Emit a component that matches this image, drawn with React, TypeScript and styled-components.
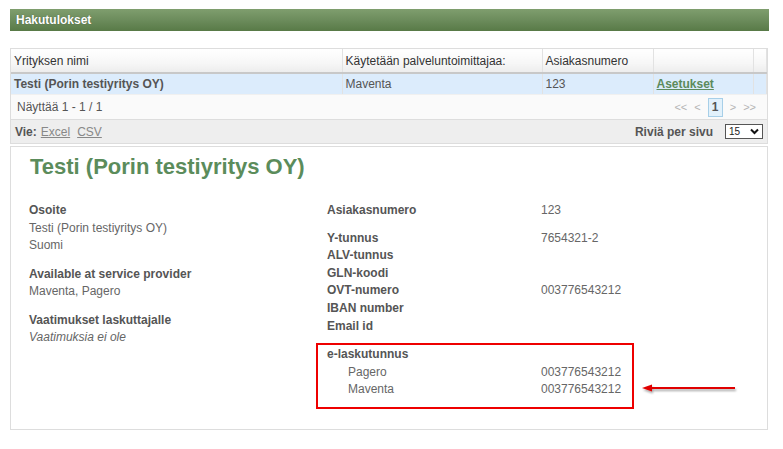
import React from 'react';
import styled, { createGlobalStyle } from 'styled-components';

const GlobalStyle = createGlobalStyle`
  html, body {
    margin: 0;
    padding: 0;
    background: #ffffff;
  }
  body {
    font-family: "Liberation Sans", Arial, sans-serif;
    font-size: 12px;
    color: #555555;
  }
`;

const Page = styled.div`
  width: 759px;
  padding: 9px 0 0 10px;
`;

const TitleBar = styled.div`
  height: 22px;
  line-height: 22px;
  padding-left: 6px;
  background: linear-gradient(to bottom, #7f9e6e 0%, #6c8c5c 50%, #587a47 100%);
  color: #ffffff;
  font-weight: bold;
  font-size: 12px;
  text-shadow: 0 0 1px rgba(0, 0, 0, 0.4);
`;

const Grid = styled.div`
  margin-top: 17px;
  width: 758px;
  border: 1px solid #dddddd;
  box-sizing: border-box;
`;

const Table = styled.table`
  width: 100%;
  border-collapse: collapse;
  table-layout: fixed;
`;

const HeadCell = styled.th<{ $w?: number }>`
  box-sizing: border-box;
  ${(p) => (p.$w ? `width: ${p.$w}px;` : '')}
  height: 24px;
  padding: 0 3px;
  text-align: left;
  font-weight: normal;
  color: #333333;
  background: linear-gradient(to bottom, #ffffff 0%, #f7f7f7 60%, #ededed 100%);
  border-right: 1px solid #e2e2e2;
  border-bottom: 2px solid #c8c8c8;
  white-space: nowrap;
  overflow: hidden;
`;

const Cell = styled.td<{ $bold?: boolean }>`
  box-sizing: border-box;
  height: 21px;
  line-height: 14px;
  padding: 0 3px;
  background: #dcecfc;
  border-right: 1px solid #e2e2e2;
  font-weight: ${(p) => (p.$bold ? 'bold' : 'normal')};
  color: #555555;
  white-space: nowrap;
  overflow: hidden;
`;

const SettingsLink = styled.a`
  color: #5b8a5b;
  font-weight: bold;
  text-decoration: underline;
`;

const PagerRow = styled.div`
  display: flex;
  align-items: center;
  justify-content: space-between;
  height: 24px;
  padding: 0 6px;
  background: #fafafa;
  border-top: 1px solid #f0f0f0;
`;

const Pager = styled.div`
  display: flex;
  align-items: center;
  gap: 7px;
  color: #b4b4b4;
  font-size: 11px;
  margin-right: 5px;
`;

const PageBox = styled.span`
  display: inline-block;
  width: 13px;
  height: 17px;
  line-height: 17px;
  text-align: center;
  border: 1px solid #a7cfe8;
  background: #e2f1fb;
  color: #555555;
  font-weight: bold;
  font-size: 12px;
`;

const ExportRow = styled.div`
  display: flex;
  align-items: center;
  justify-content: space-between;
  height: 23px;
  padding: 0 4px;
  background: #eeeeee;
  border-top: 1px solid #dddddd;
`;

const Bold = styled.span`
  font-weight: bold;
  color: #555555;
`;

const ExportLink = styled.a<{ $gap: number }>`
  color: #888888;
  text-decoration: underline;
  margin-left: ${(p) => p.$gap}px;
`;

const PerPage = styled.div`
  display: flex;
  align-items: center;
  gap: 12px;
`;

const Select = styled.div`
  display: flex;
  align-items: center;
  justify-content: space-between;
  width: 30px;
  height: 13px;
  padding: 0 3px;
  border: 1px solid #555555;
  background: #ffffff;
  color: #222222;
  font-size: 10px;
`;

const Detail = styled.div`
  position: relative;
  margin-top: 2px;
  width: 758px;
  height: 284px;
  box-sizing: border-box;
  border: 1px solid #dddddd;
  padding: 5px 18px 0 18px;
`;

const Heading = styled.h1`
  margin: 0 0 0 1px;
  font-size: 22px;
  line-height: 30px;
  font-weight: bold;
  color: #5b8c5b;
`;

const Columns = styled.div`
  display: flex;
  margin-top: 20px;
`;

const LeftCol = styled.div`
  width: 298px;
  display: flex;
  flex-direction: column;
  gap: 11px;
`;

const Block = styled.div`
  display: flex;
  flex-direction: column;
  line-height: 17.5px;
`;

const Label = styled.div`
  font-weight: bold;
  color: #555555;
`;

const Value = styled.div<{ $italic?: boolean }>`
  color: #666666;
  font-style: ${(p) => (p.$italic ? 'italic' : 'normal')};
`;

const RightCol = styled.div`
  display: flex;
  flex-direction: column;
  gap: 10px;
  width: 320px;
`;

const Row = styled.div<{ $indent?: boolean }>`
  display: grid;
  grid-template-columns: ${(p) => (p.$indent ? '21px 193px' : '214px')} 1fr;
  line-height: 17.6px;
`;

const Invoice = styled.div`
  margin-left: -11px;
  margin-top: -2px;
  width: 318px;
  box-sizing: border-box;
  border: 2px solid #ee0000;
  padding: 1px 0 8px 9px;
`;

const Arrow = styled.svg`
  position: absolute;
  left: 619px;
  top: 234px;
`;

const rows: Array<[string, string]> = [
  ['Y-tunnus', '7654321-2'],
  ['ALV-tunnus', ''],
  ['GLN-koodi', ''],
  ['OVT-numero', '003776543212'],
  ['IBAN number', ''],
  ['Email id', ''],
];

const App: React.FC = () => {
  return (
    <>
      <GlobalStyle />
      <Page>
        <TitleBar>Hakutulokset</TitleBar>

        <Grid>
          <Table>
            <thead>
              <tr>
                <HeadCell $w={331}>Yrityksen nimi</HeadCell>
                <HeadCell $w={200}>Käytetään palveluntoimittajaa:</HeadCell>
                <HeadCell $w={111}>Asiakasnumero</HeadCell>
                <HeadCell $w={100}></HeadCell>
                <HeadCell></HeadCell>
              </tr>
            </thead>
            <tbody>
              <tr>
                <Cell $bold>Testi (Porin testiyritys OY)</Cell>
                <Cell>Maventa</Cell>
                <Cell>123</Cell>
                <Cell>
                  <SettingsLink>Asetukset</SettingsLink>
                </Cell>
                <Cell></Cell>
              </tr>
            </tbody>
          </Table>
          <PagerRow>
            <span>Näyttää 1 - 1 / 1</span>
            <Pager>
              <span>&lt;&lt;</span>
              <span>&lt;</span>
              <PageBox>1</PageBox>
              <span>&gt;</span>
              <span>&gt;&gt;</span>
            </Pager>
          </PagerRow>
          <ExportRow>
            <span>
              <Bold>Vie:</Bold>
              <ExportLink $gap={4}>Excel</ExportLink>
              <ExportLink $gap={7}>CSV</ExportLink>
            </span>
            <PerPage>
              <Bold>Riviä per sivu</Bold>
              <Select>
                <span>15</span>
                <svg width="9" height="7" viewBox="0 0 9 7">
                  <path d="M1 1.5 L4.5 5 L8 1.5" stroke="#111" strokeWidth="2" fill="none" />
                </svg>
              </Select>
            </PerPage>
          </ExportRow>
        </Grid>

        <Detail>
          <Heading>Testi (Porin testiyritys OY)</Heading>
          <Columns>
            <LeftCol>
              <Block>
                <Label>Osoite</Label>
                <Value>Testi (Porin testiyritys OY)</Value>
                <Value>Suomi</Value>
              </Block>
              <Block>
                <Label>Available at service provider</Label>
                <Value>Maventa, Pagero</Value>
              </Block>
              <Block>
                <Label>Vaatimukset laskuttajalle</Label>
                <Value $italic>Vaatimuksia ei ole</Value>
              </Block>
            </LeftCol>
            <RightCol>
              <Row>
                <Label>Asiakasnumero</Label>
                <Value>123</Value>
              </Row>
              <div>
                {rows.map(([k, v]) => (
                  <Row key={k}>
                    <Label>{k}</Label>
                    <Value>{v}</Value>
                  </Row>
                ))}
              </div>
              <Invoice>
                <Row>
                  <Label>e-laskutunnus</Label>
                </Row>
                <Row $indent>
                  <span />
                  <Value>Pagero</Value>
                  <Value>003776543212</Value>
                </Row>
                <Row $indent>
                  <span />
                  <Value>Maventa</Value>
                  <Value>003776543212</Value>
                </Row>
              </Invoice>
            </RightCol>
          </Columns>
          <Arrow width="112" height="16" viewBox="0 0 112 16">
            <defs>
              <filter id="sh" x="-10%" y="-50%" width="120%" height="200%">
                <feDropShadow dx="1" dy="2" stdDeviation="1" floodColor="#000" floodOpacity="0.35" />
              </filter>
            </defs>
            <g filter="url(#sh)">
              <line x1="20" y1="7" x2="105" y2="7" stroke="#e00000" strokeWidth="2" />
              <path d="M12 7 L22 3.5 L22 10.5 Z" fill="#e00000" />
            </g>
          </Arrow>
        </Detail>
      </Page>
    </>
  );
};

export default App;
